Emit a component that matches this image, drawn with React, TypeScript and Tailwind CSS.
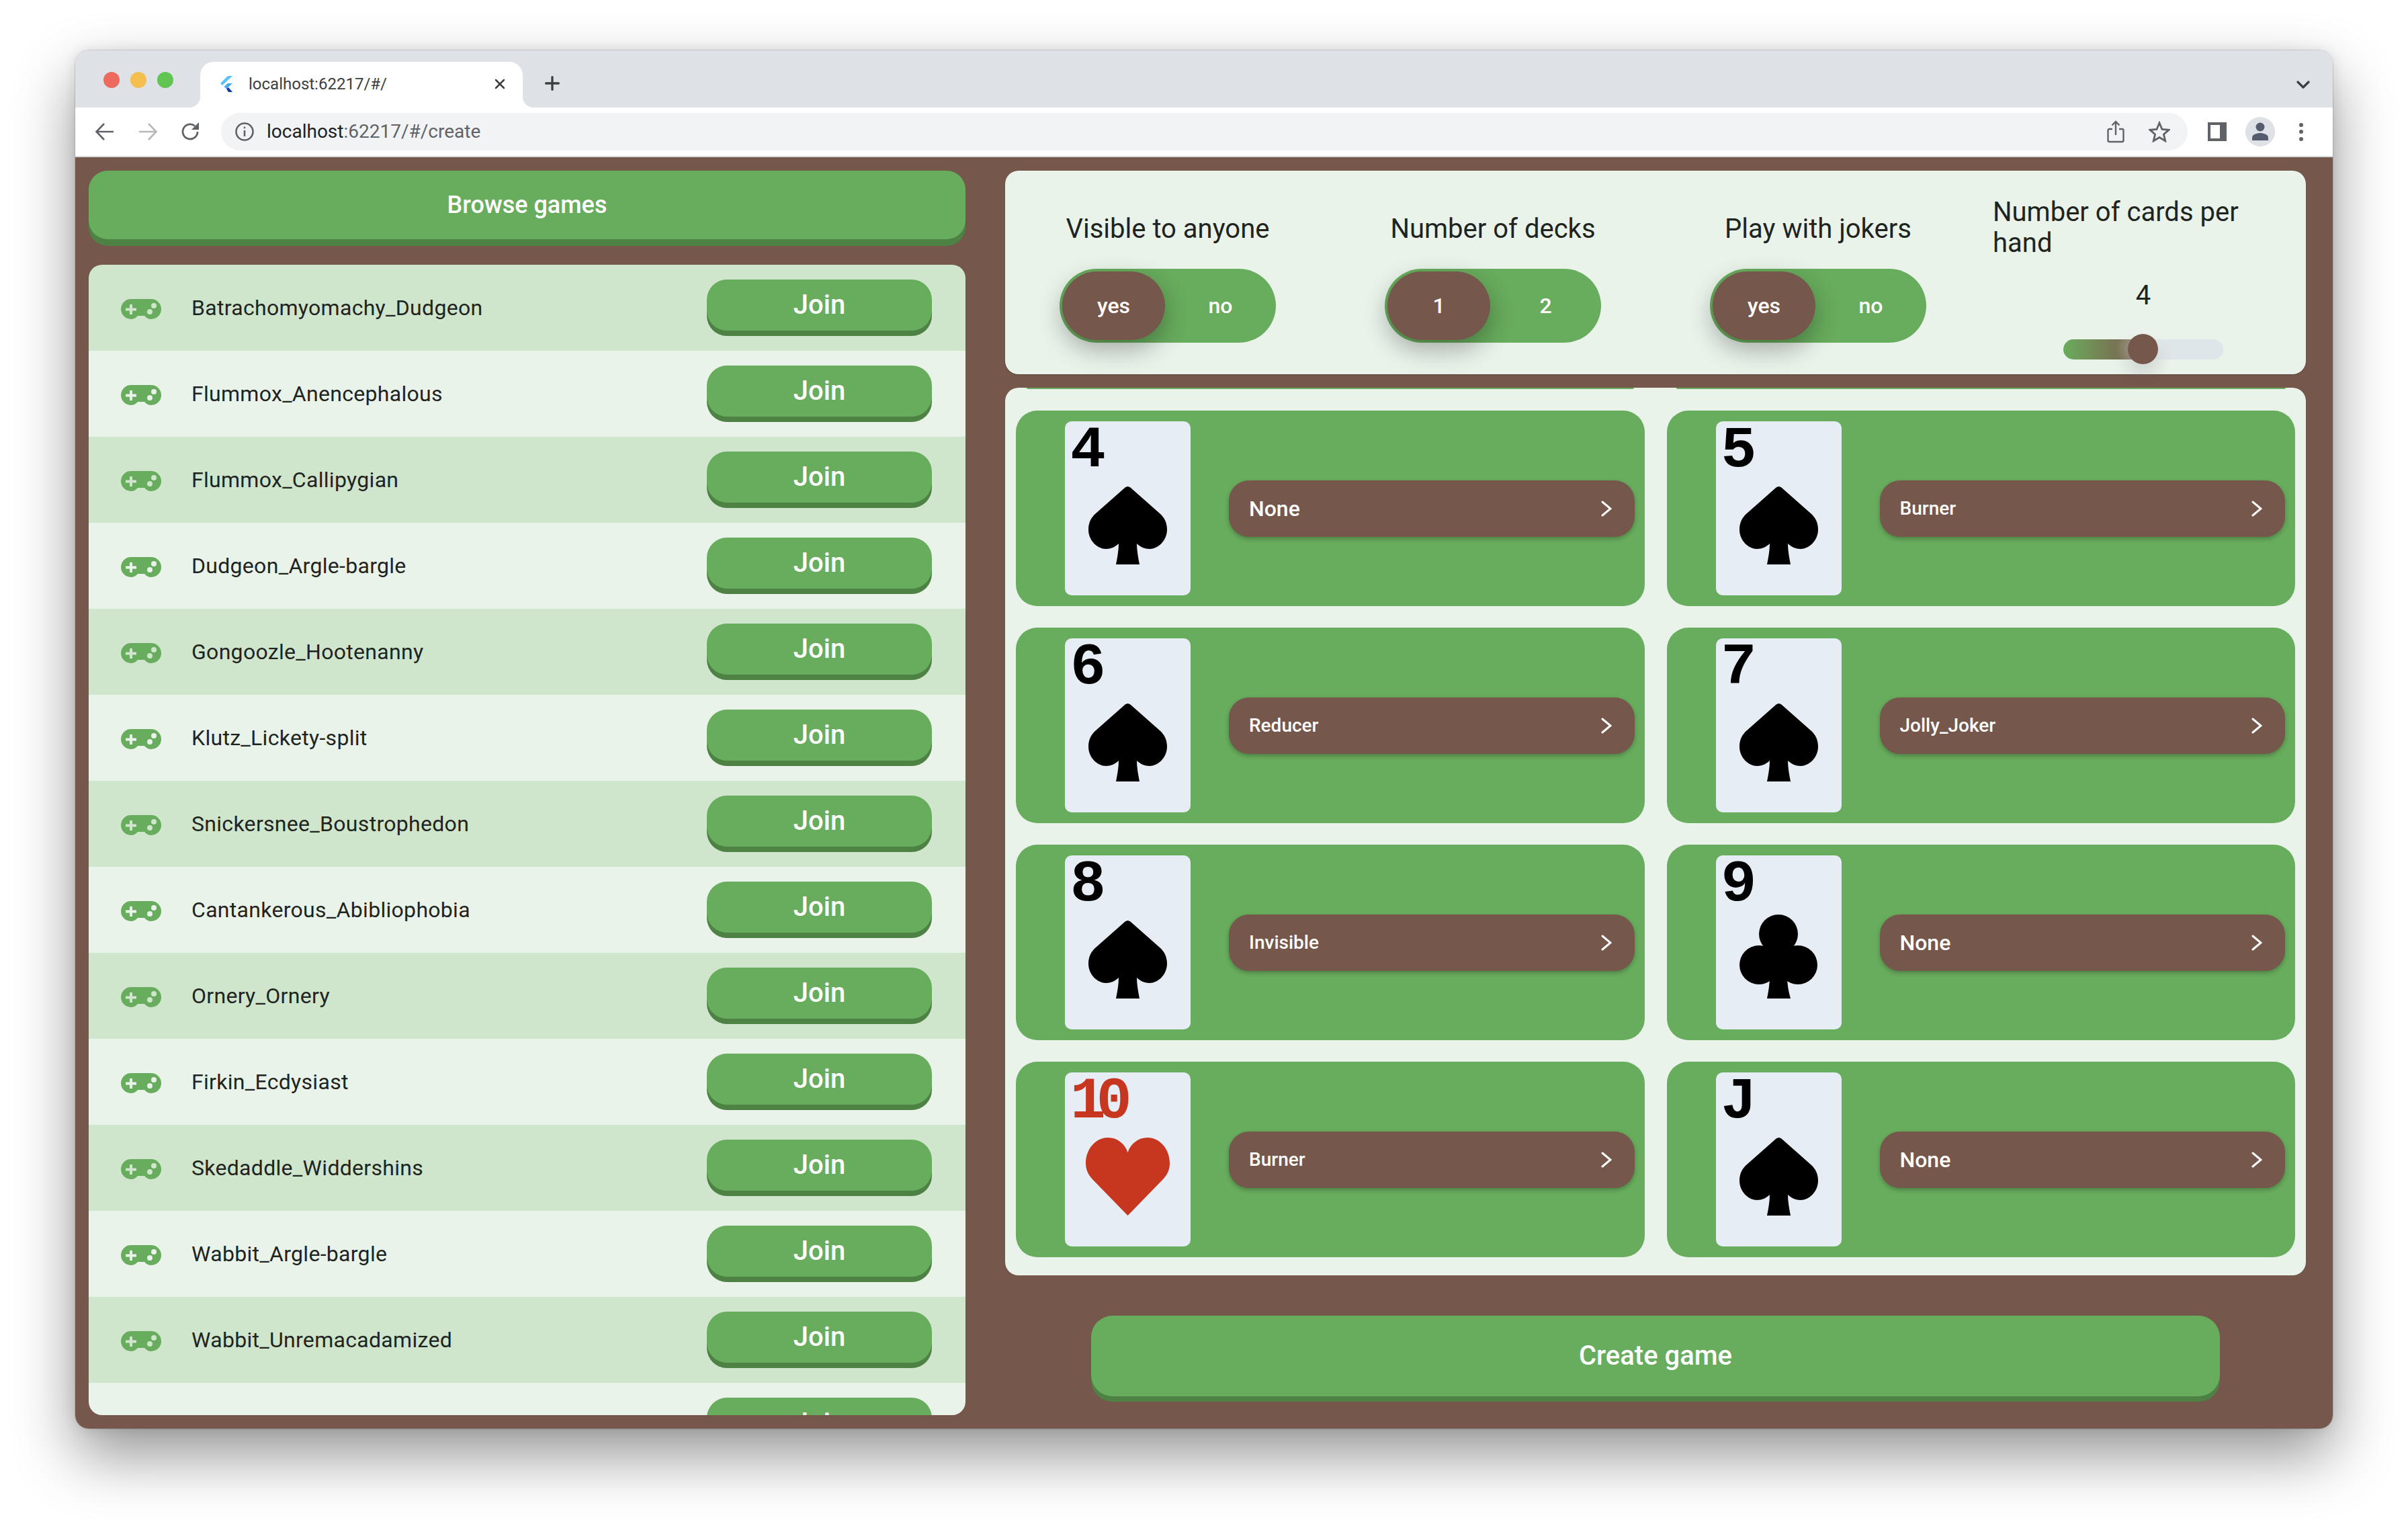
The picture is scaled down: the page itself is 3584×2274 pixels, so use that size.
import { ChevronDown, Plus, X } from "lucide-react";

const GAMES = [
  "Batrachomyomachy_Dudgeon",
  "Flummox_Anencephalous",
  "Flummox_Callipygian",
  "Dudgeon_Argle-bargle",
  "Gongoozle_Hootenanny",
  "Klutz_Lickety-split",
  "Snickersnee_Boustrophedon",
  "Cantankerous_Abibliophobia",
  "Ornery_Ornery",
  "Firkin_Ecdysiast",
  "Skedaddle_Widdershins",
  "Wabbit_Argle-bargle",
  "Wabbit_Unremacadamized",
  "",
];

type Suit = "spade" | "club" | "heart";

const CARDS: { rank: string; suit: Suit; power: string; small?: boolean }[] = [
  { rank: "4", suit: "spade", power: "None" },
  { rank: "5", suit: "spade", power: "Burner", small: true },
  { rank: "6", suit: "spade", power: "Reducer", small: true },
  { rank: "7", suit: "spade", power: "Jolly_Joker", small: true },
  { rank: "8", suit: "spade", power: "Invisible", small: true },
  { rank: "9", suit: "club", power: "None" },
  { rank: "10", suit: "heart", power: "Burner", small: true },
  { rank: "J", suit: "spade", power: "None" },
];

function GamepadIcon() {
  return (
    <svg width="60" height="30" viewBox="0 0 60 30" className="shrink-0 translate-y-[2px]">
      <path
        fill="#68ac5d"
        fillRule="evenodd"
        d="M15 0H45A15 15 0 0 1 45 30C40 30 37 27 35 25H25C23 27 20 30 15 30A15 15 0 0 1 15 0ZM13 8V13.5H7V17.5H13V23H17V17.5H23V13.5H17V8ZM49 6A4 4 0 1 0 49 14A4 4 0 1 0 49 6ZM43 15A4 4 0 1 0 43 23A4 4 0 1 0 43 15Z"
      />
    </svg>
  );
}

function SuitIcon({ suit }: { suit: Suit }) {
  if (suit === "heart") {
    return (
      <svg width="125" height="116" viewBox="0 0 125 116">
        <path
          fill="#c7361f"
          d="M62.5 22C67 9 78 0 92 0C110 0 125 17 125 38C125 47 122 54 116 61L62.5 116L9 61C3 54 0 47 0 38C0 17 15 0 33 0C47 0 58 9 62.5 22Z"
        />
      </svg>
    );
  }
  if (suit === "club") {
    return (
      <svg width="116" height="125" viewBox="0 0 116 125">
        <ellipse cx="58" cy="29" rx="29" ry="29" />
        <ellipse cx="29" cy="75" rx="29" ry="29" />
        <ellipse cx="87" cy="75" rx="29" ry="29" />
        <path d="M45 40H71V92C71 104 73 115 76 125H41C43 115 45 104 45 92Z" />
      </svg>
    );
  }
  return (
    <svg width="117" height="116" viewBox="0 0 117 116">
      <path d="M58.5 0C60 0 62 1 63 2L106 40C113 46 117 54 117 64C117 81 103 93 91 93C84 93 77 90 72 85C72 95 74 106 76 116H41C43 106 45 95 45 85C40 90 33 93 26 93C14 93 0 81 0 64C0 54 4 46 11 40L54 2C55 1 57 0 58.5 0Z" />
    </svg>
  );
}

function Toggle({ a, b }: { a: string; b: string }) {
  return (
    <div className="flex h-[110px] w-[322px] items-center rounded-full bg-[#68ac5d] pl-[4px] text-[32px] font-medium text-white">
      <div className="flex h-[102px] w-[153px] items-center justify-center rounded-full bg-[#75574b] shadow-[0_14px_36px_rgba(0,0,0,0.3)]">
        {a}
      </div>
      <div className="flex-1 text-center">{b}</div>
    </div>
  );
}

function Option({ label, a, b }: { label: string; a: string; b: string }) {
  return (
    <div className="flex flex-col items-center">
      <div className="text-[40px] leading-[46px] text-[#1f241f]">{label}</div>
      <div className="mt-[36px]">
        <Toggle a={a} b={b} />
      </div>
    </div>
  );
}

function CardTile({ rank, suit, power, small }: { rank: string; suit: Suit; power: string; small?: boolean }) {
  return (
    <div className="flex h-[291px] items-center rounded-[32px] bg-[#68ac5d]">
      <div className="ml-[73px] h-[259px] w-[187px] shrink-0 rounded-[10px] bg-[#e6edf4]">
        <div
          className={`h-[88px] pl-[8px] font-['Liberation_Mono',monospace] text-[88px] leading-[88px] font-bold tracking-[-14px] ${
            suit === "heart" ? "text-[#c7361f]" : "text-black"
          }`}
        >
          {rank}
        </div>
        <div className="flex h-[125px] items-end justify-center">
          <SuitIcon suit={suit} />
        </div>
      </div>
      <div className="mr-[15px] ml-[57px] flex h-[84px] flex-1 items-center justify-between rounded-[30px] bg-[#75574b] pr-[34px] pl-[30px] text-white shadow-[0_3px_6px_rgba(0,0,0,0.25)]">
        <span className={small ? "text-[28px] font-medium" : "text-[32px] font-medium"}>{power}</span>
        <svg width="16" height="24" viewBox="0 0 16 24" fill="none" stroke="white" strokeWidth="3" strokeLinecap="round">
          <path d="M2 2L14 12L2 22" />
        </svg>
      </div>
    </div>
  );
}

function BrowserChrome() {
  return (
    <div className="shrink-0 font-['Roboto',sans-serif]">
      <div className="flex h-[85px] items-end bg-[#dee1e6]">
        <div className="mb-[29px] ml-[42px] flex gap-[16px]">
          <div className="h-[24px] w-[24px] rounded-full bg-[#ed6a5e]" />
          <div className="h-[24px] w-[24px] rounded-full bg-[#f4bf4f]" />
          <div className="h-[24px] w-[24px] rounded-full bg-[#61c554]" />
        </div>
        <div className="relative ml-[40px] flex h-[68px] w-[480px] items-center rounded-t-[20px] bg-white pr-[22px] pl-[30px] pb-[2px]">
          <div className="absolute bottom-0 -left-[16px] h-[16px] w-[16px] bg-white">
            <div className="h-full w-full rounded-br-[16px] bg-[#dee1e6]" />
          </div>
          <div className="absolute -right-[16px] bottom-0 h-[16px] w-[16px] bg-white">
            <div className="h-full w-full rounded-bl-[16px] bg-[#dee1e6]" />
          </div>
          <svg width="18" height="24" viewBox="0 0 18 24" className="shrink-0">
            <path fill="#5cc4f5" d="M11 0H18L3 14L0 11Z" />
            <path fill="#45a8ec" d="M11 11H18L9 19L5.5 16Z" />
            <path fill="#0d3f9a" d="M9 19L12 17L18 24H12Z" />
          </svg>
          <span className="ml-[24px] flex-1 text-[24px] text-[#3c4043]">localhost:62217/#/</span>
          <X className="h-[24px] w-[24px] text-[#3c4043]" strokeWidth={2.5} />
        </div>
        <Plus className="mb-[20px] ml-[28px] h-[32px] w-[32px] text-[#3c4043]" strokeWidth={2.5} />
        <div className="flex-1" />
        <ChevronDown className="mr-[28px] mb-[18px] h-[32px] w-[32px] text-[#3c4043]" strokeWidth={2.5} />
      </div>
      <div className="flex h-[74px] items-center border-b-2 border-[#dadce0] bg-white pl-[28px]">
        <div className="flex gap-[32px]">
          <svg width="32" height="32" viewBox="0 0 32 32" fill="none" stroke="#5f6368" strokeWidth="2.6">
            <path d="M29 16H4M15 4L3.5 16L15 28" />
          </svg>
          <svg width="32" height="32" viewBox="0 0 32 32" fill="none" stroke="#b6b8bb" strokeWidth="2.6">
            <path d="M3 16H28M17 4L28.5 16L17 28" />
          </svg>
          <svg width="32" height="32" viewBox="0 0 32 32" fill="none" stroke="#5f6368" strokeWidth="2.8">
            <path d="M26 16A11 11 0 1 1 22 7.5" />
            <path fill="#5f6368" stroke="none" d="M28 2V13H17Z" />
          </svg>
        </div>
        <div className="ml-[29px] flex h-[56px] w-[2927px] items-center rounded-full bg-[#f1f3f4] pr-[20px] pl-[20px]">
          <svg width="30" height="30" viewBox="0 0 30 30" fill="none" stroke="#5f6368" strokeWidth="2.6">
            <circle cx="15" cy="15" r="12.5" />
            <path d="M15 13V22" />
            <circle cx="15" cy="9" r="1.4" fill="#5f6368" stroke="none" />
          </svg>
          <span className="ml-[18px] flex-1 text-[28px] text-[#5f6368]">
            <span className="text-[#202124]">localhost</span>:62217/#/create
          </span>
          <svg width="26" height="34" viewBox="0 0 26 34" fill="none" stroke="#5f6368" strokeWidth="2.4">
            <path d="M8 13H3.5A2 2 0 0 0 1.5 15V30A2 2 0 0 0 3.5 32H22.5A2 2 0 0 0 24.5 30V15A2 2 0 0 0 22.5 13H18" />
            <path d="M13 22V2M7.5 7.5L13 2L18.5 7.5" />
          </svg>
          <svg width="32" height="32" viewBox="0 0 32 32" fill="none" stroke="#5f6368" strokeWidth="2.8" className="mr-[6px] ml-[36px]">
            <path d="M16 3L20 12.5L30 13.3L22.4 19.9L24.7 29.7L16 24.5L7.3 29.7L9.6 19.9L2 13.3L12 12.5Z" />
          </svg>
        </div>
        <div className="ml-[30px] flex h-[28px] w-[28px] justify-start border-[4px] border-r-[10px] border-[#5f6368] bg-white" />
        <div className="ml-[28px] flex h-[44px] w-[44px] items-center justify-center rounded-full bg-[#dee1e6]">
          <svg width="26" height="28" viewBox="0 0 26 28" fill="#545c6e">
            <circle cx="13" cy="7" r="6.5" />
            <path d="M1 27V23C1 18 8 16 13 16C18 16 25 18 25 23V27Z" />
          </svg>
        </div>
        <div className="ml-[36px] flex flex-col gap-[4.5px]">
          <div className="h-[6px] w-[6px] rounded-full bg-[#5f6368]" />
          <div className="h-[6px] w-[6px] rounded-full bg-[#5f6368]" />
          <div className="h-[6px] w-[6px] rounded-full bg-[#5f6368]" />
        </div>
      </div>
    </div>
  );
}

export default function App() {
  return (
    <div className="h-[2274px] w-[3584px] overflow-hidden bg-white pt-[75px] pl-[112px] font-['Roboto',sans-serif]">
      <div className="flex h-[2051px] w-[3360px] flex-col overflow-hidden rounded-[20px] shadow-[0_40px_90px_rgba(0,0,0,0.42),0_0_0_1px_rgba(0,0,0,0.12),0_0_20px_rgba(0,0,0,0.1)]">
        <BrowserChrome />
        <div className="flex min-h-0 flex-1 gap-[59px] bg-[#75574b] pt-[20px] pr-[40px] pb-[20px] pl-[20px]">
          <div className="flex w-[1305px] flex-col">
            <button
              type="button"
              className="mb-[8px] h-[102px] w-full shrink-0 rounded-[28px] bg-[#68ac5d] text-[36px] font-medium text-white shadow-[0_10px_0_#4e8144]"
            >
              Browse games
            </button>
            <div className="mt-[30px] min-h-0 flex-1 overflow-hidden rounded-[20px]">
              {GAMES.map((name, i) => (
                <div
                  key={i}
                  className={`flex h-[128px] items-center pr-[50px] pl-[48px] ${i % 2 === 0 ? "bg-[#cfe5cc]" : "bg-[#e9f3ea]"}`}
                >
                  <GamepadIcon />
                  <span className="ml-[45px] flex-1 text-[32px] tracking-[0.3px] text-[#1f241f]">{name}</span>
                  <button
                    type="button"
                    className="mb-[8px] h-[76px] w-[335px] rounded-[30px] bg-[#68ac5d] text-[40px] font-medium text-white shadow-[0_8px_0_#4e8144]"
                  >
                    Join
                  </button>
                </div>
              ))}
            </div>
          </div>
          <div className="flex flex-1 flex-col">
            <div className="grid h-[303px] grid-cols-4 items-center rounded-[20px] bg-[#e9f3ea] pt-[16px] shadow-[0_1px_1px_rgba(0,0,0,0.25)]">
              <Option label="Visible to anyone" a="yes" b="no" />
              <Option label="Number of decks" a="1" b="2" />
              <Option label="Play with jokers" a="yes" b="no" />
              <div className="flex flex-col items-center px-[18px]">
                <div className="w-full text-[40px] leading-[46px] text-[#1f241f]">Number of cards per hand</div>
                <div className="mt-[32px] text-[40px] leading-[46px] text-[#1f241f]">4</div>
                <div className="relative mt-[42px] flex h-[30px] w-[238px]">
                  <div className="w-[118px] rounded-l-full bg-linear-to-r from-[#68ac5d] to-[#75574b]" />
                  <div className="flex-1 rounded-r-full bg-[#dfe6e9]" />
                  <div className="absolute top-[-8px] left-[96px] h-[45px] w-[45px] rounded-full bg-[#75574b] shadow-[0_0_14px_10px_rgba(255,255,255,0.28),0_10px_24px_rgba(0,0,0,0.22)]" />
                </div>
              </div>
            </div>
            <div className="mt-[20px] rounded-[20px] bg-[#e9f3ea] px-[16px] pb-[27px]">
              <div className="grid grid-cols-2 gap-x-[33px]">
                <div className="mx-[16px] h-[2px] rounded-b-full bg-[#68ac5d]" />
                <div className="mx-[14px] h-[2px] rounded-b-full bg-[#68ac5d]" />
              </div>
              <div className="mt-[32px] grid grid-cols-2 gap-x-[33px] gap-y-[32px]">
                {CARDS.map((card) => (
                  <CardTile key={card.rank} {...card} />
                ))}
              </div>
            </div>
            <button
              type="button"
              className="mx-auto mt-[60px] h-[120px] w-[1680px] shrink-0 rounded-[32px] bg-[#68ac5d] text-[40px] font-medium text-white shadow-[0_8px_0_#4e8144]"
            >
              Create game
            </button>
          </div>
        </div>
      </div>
    </div>
  );
}
